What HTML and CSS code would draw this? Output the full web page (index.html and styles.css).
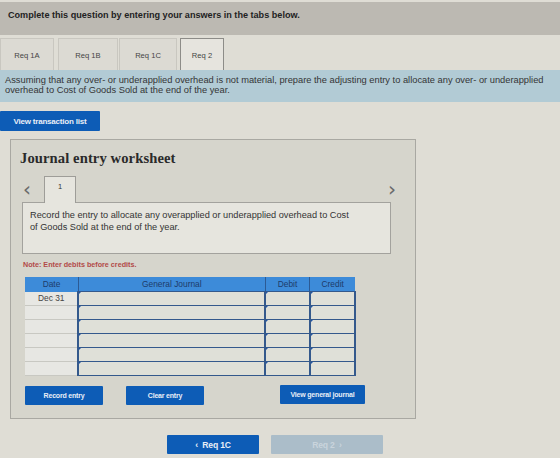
FILE: index.html
```html
<!DOCTYPE html>
<html lang="en">
<head>
    <meta charset="UTF-8">
    <meta name="viewport" content="width=device-width, initial-scale=1.0">
    <title>Req 2 - Journal entry</title>
    <link rel="stylesheet" href="styles.css">
</head>
<body>

<header class="top">
    <p>Complete this question by entering your answers in the tabs below.</p>
</header>

<nav class="tabs">
    <div class="tab tab-1a">Req 1A</div>
    <div class="tab tab-1b">Req 1B</div>
    <div class="tab tab-1c">Req 1C</div>
    <div class="tab tab-2 active">Req 2</div>
</nav>

<div class="prompt">
    Assuming that any over- or underapplied overhead is not material, prepare the adjusting entry to allocate any over- or underapplied overhead to Cost of Goods Sold at the end of the year.
</div>

<button class="btn view-list">View transaction list</button>

<div class="worksheet">
    <h2>Journal entry worksheet</h2>

    <div class="pager">
        <span class="arrow prev-arrow">&lsaquo;</span>
        <span class="page-tab">1</span>
        <span class="arrow next-arrow">&rsaquo;</span>
    </div>

    <div class="entry-desc">
        Record the entry to allocate any overapplied or underapplied overhead to Cost of Goods Sold at the end of the year.
    </div>

    <p class="note">Note: Enter debits before credits.</p>

    <table class="journal">
        <thead>
            <tr>
                <th class="c-date">Date</th>
                <th class="c-gj">General Journal</th>
                <th class="c-dr">Debit</th>
                <th class="c-cr">Credit</th>
            </tr>
        </thead>
        <tbody id="journal-rows"></tbody>
    </table>

    <div class="actions">
        <button class="btn record">Record entry</button>
        <button class="btn clear">Clear entry</button>
        <button class="btn view-journal">View general journal</button>
    </div>
</div>

<div class="bottom-nav">
    <button class="btn prev">&lsaquo;&nbsp;&nbsp;Req 1C</button>
    <button class="btn next disabled">Req 2&nbsp;&nbsp;&rsaquo;</button>
</div>

<script>
// Six empty journal lines, first one dated
const rows = document.getElementById('journal-rows');
for (let i = 0; i < 6; i++) {
    const tr = document.createElement('tr');
    tr.innerHTML = `
        <td class="c-date">${i === 0 ? 'Dec 31' : ''}</td>
        <td class="input"></td>
        <td class="input"></td>
        <td class="input"></td>
    `;
    rows.appendChild(tr);
}
</script>

</body>
</html>
```

FILE: styles.css
```css
body {
    font-family: "Liberation Sans", Arial, sans-serif;
    background-color: #dfddd5;
    color: #333;
    margin: 0;
    padding: 0;
    height: 458px;
    overflow: hidden;
}
.top {
    margin-top: 2px;
    height: 33px;
    background-color: #bcb9b2;
    padding-left: 8px;
}
.top p {
    margin: 0;
    padding-top: 8px;
    font-size: 9.1px;
    font-weight: bold;
    color: #222;
}
.tabs {
    display: flex;
    margin-top: 3px;
    height: 32px;
}
.tab {
    box-sizing: border-box;
    height: 32px;
    padding-top: 12px;
    text-align: center;
    font-size: 7.6px;
    color: #444;
    background-color: #dcdad3;
    border: 1px solid #c9c7c0;
    border-bottom: none;
}
.tab-1a { width: 54px; }
.tab-1b { width: 60px; margin-left: 4px; }
.tab-1c { width: 58px; margin-left: 1px; }
.tab-2 { width: 44px; margin-left: 3px; }
.tab.active {
    background-color: #e6e4de;
    border: 1px solid #8d8c88;
    border-bottom: none;
}
.prompt {
    box-sizing: border-box;
    height: 32px;
    padding: 5px 5px 0;
    background-color: #b2cbd5;
    font-size: 9.3px;
    line-height: 10px;
    color: #353535;
}
.btn {
    display: block;
    border: none;
    border-radius: 1px;
    background-color: #0d5cb6;
    color: #e9eef6;
    font-family: "Liberation Sans", Arial, sans-serif;
    font-size: 7px;
    font-weight: bold;
    letter-spacing: -0.2px;
    padding: 0;
    cursor: pointer;
}
.view-list {
    margin-top: 9px;
    width: 100px;
    height: 20px;
    font-size: 8px;
}
.worksheet {
    box-sizing: border-box;
    margin: 8px 0 0 10px;
    width: 406px;
    height: 280px;
    background-color: #d6d5cc;
    border: 1px solid #a9a8a2;
    padding: 10px 0 0 12px;
}
.worksheet h2 {
    margin: 0 0 0 -3px;
    height: 16px;
    line-height: 16px;
    font-family: "Liberation Serif", "Times New Roman", serif;
    font-size: 14.6px;
    font-weight: bold;
    letter-spacing: 0.1px;
    color: #2a2a2a;
}
.pager {
    display: flex;
    align-items: flex-end;
    height: 27px;
    margin: 9px 0 0 -1px;
    width: 369px;
}
.arrow {
    font-size: 20px;
    color: #6a6a6a;
    line-height: 20px;
    align-self: center;
    font-family: "DejaVu Sans", sans-serif;
    font-weight: normal;
}
.prev-arrow {
    margin: 0 13px 0 1px;
}
.next-arrow {
    margin-left: auto;
    margin-right: -5px;
}
.page-tab {
    box-sizing: border-box;
    width: 32px;
    height: 27px;
    padding-top: 5px;
    text-align: center;
    font-size: 7.5px;
    background-color: #e6e5de;
    border: 1px solid #9e9d98;
    border-bottom: none;
    margin-bottom: -1px;
    position: relative;
    z-index: 1;
}
.entry-desc {
    box-sizing: border-box;
    margin-left: -1px;
    width: 369px;
    height: 52px;
    background-color: #e6e5de;
    border: 1px solid #a3a29d;
    padding: 6px 38px 0 7px;
    font-size: 9.2px;
    line-height: 12px;
    color: #333;
}
.note {
    margin: 6px 0 0 0;
    font-size: 7.2px;
    line-height: 9px;
    font-weight: bold;
    color: #b24a48;
}
.journal {
    border-collapse: collapse;
    margin: 8px 0 0 2px;
    width: 331px;
    font-size: 8.4px;
}
.journal th {
    height: 14px;
    padding: 0;
    background-color: #3d8bd9;
    color: #1d3c6a;
    font-weight: normal;
    border-left: 1px solid #2c5a94;
}
.journal th.c-date {
    border-left: none;
}
.c-date { width: 53px; }
.c-gj { width: 188px; }
.c-dr { width: 44px; }
.c-cr { width: 45px; }
.journal td {
    height: 13px;
    padding: 0;
}
.journal td.c-date {
    background-color: #e7e7e3;
    text-align: center;
    color: #444;
    border-bottom: 1px solid #c8c8c2;
}
.journal td.input {
    background-color: #dfe0d8;
    border: 2px solid #34598c;
    border-top-width: 1px;
    border-bottom-width: 1px;
    position: relative;
}
.journal td.input::before {
    content: "";
    position: absolute;
    left: 0;
    top: 0;
    border-top: 2px solid #2255a4;
    border-right: 2px solid transparent;
}
.actions {
    display: flex;
    margin: 10px 0 0 2px;
}
.actions .btn {
    height: 19px;
}
.record { width: 78px; }
.clear { width: 78px; margin-left: 23px; }
.view-journal { width: 85px; margin-left: 76px; margin-top: -1px; }
.bottom-nav {
    display: flex;
    margin: 16px 0 0 167px;
}
.bottom-nav .btn {
    height: 19px;
    font-size: 8.6px;
}
.prev {
    width: 92px;
}
.next.disabled {
    width: 112px;
    margin-left: 12px;
    background-color: #abbdc9;
    color: #c9d4dc;
    cursor: default;
}
```
